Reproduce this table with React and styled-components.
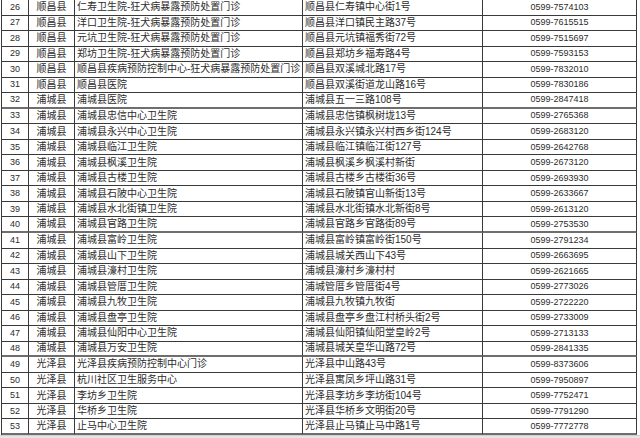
import styled, { createGlobalStyle } from "styled-components";

const GlobalStyle = createGlobalStyle`
  html, body {
    margin: 0;
    padding: 0;
    background: #ffffff;
  }
  body {
    width: 640px;
    height: 438px;
    overflow: hidden;
    font-family: "Liberation Sans", "Noto Sans CJK SC", sans-serif;
    color: #2a2a2a;
  }
`;

const rows = [
  [26, "顺昌县", "仁寿卫生院-狂犬病暴露预防处置门诊", "顺昌县仁寿镇中心街1号", "0599-7574103"],
  [27, "顺昌县", "洋口卫生院-狂犬病暴露预防处置门诊", "顺昌县洋口镇民主路37号", "0599-7615515"],
  [28, "顺昌县", "元坑卫生院-狂犬病暴露预防处置门诊", "顺昌县元坑镇福秀街72号", "0599-7515697"],
  [29, "顺昌县", "郑坊卫生院-狂犬病暴露预防处置门诊", "顺昌县郑坊乡福寿路4号", "0599-7593153"],
  [30, "顺昌县", "顺昌县疾病预防控制中心-狂犬病暴露预防处置门诊", "顺昌县双溪城北路17号", "0599-7832010"],
  [31, "顺昌县", "顺昌县医院", "顺昌县双溪街道龙山路16号", "0599-7830186"],
  [32, "浦城县", "浦城县医院", "浦城县五一三路108号", "0599-2847418"],
  [33, "浦城县", "浦城县忠信中心卫生院", "浦城县忠信镇枫树垅13号", "0599-2765368"],
  [34, "浦城县", "浦城县永兴中心卫生院", "浦城县永兴镇永兴村西乡街124号", "0599-2683120"],
  [35, "浦城县", "浦城县临江卫生院", "浦城县临江镇临江街127号", "0599-2642768"],
  [36, "浦城县", "浦城县枫溪卫生院", "浦城县枫溪乡枫溪村新街", "0599-2673120"],
  [37, "浦城县", "浦城县古楼卫生院", "浦城县古楼乡古楼街36号", "0599-2693930"],
  [38, "浦城县", "浦城县石陂中心卫生院", "浦城县石陂镇官山新街13号", "0599-2633667"],
  [39, "浦城县", "浦城县水北街镇卫生院", "浦城县水北街镇水北新街8号", "0599-2613120"],
  [40, "浦城县", "浦城县官路卫生院", "浦城县官路乡官路街89号", "0599-2753530"],
  [41, "浦城县", "浦城县富岭卫生院", "浦城县富岭镇富岭街150号", "0599-2791234"],
  [42, "浦城县", "浦城县山下卫生院", "浦城县城关西山下43号", "0599-2663695"],
  [43, "浦城县", "浦城县濠村卫生院", "浦城县濠村乡濠村村", "0599-2621665"],
  [44, "浦城县", "浦城县管厝卫生院", "浦城管厝乡管厝街4号", "0599-2773026"],
  [45, "浦城县", "浦城县九牧卫生院", "浦城县九牧镇九牧街", "0599-2722220"],
  [46, "浦城县", "浦城县盘亭卫生院", "浦城县盘亭乡盘江村桥头街2号", "0599-2733009"],
  [47, "浦城县", "浦城县仙阳中心卫生院", "浦城县仙阳镇仙阳堂皇岭2号", "0599-2713133"],
  [48, "浦城县", "浦城县万安卫生院", "浦城县城关皇华山路72号", "0599-2841335"],
  [49, "光泽县", "光泽县疾病预防控制中心门诊", "光泽县中山路43号", "0599-8373606"],
  [50, "光泽县", "杭川社区卫生服务中心", "光泽县寓凤乡坪山路31号", "0599-7950897"],
  [51, "光泽县", "李坊乡卫生院", "光泽县李坊乡李坊街104号", "0599-7752471"],
  [52, "光泽县", "华桥乡卫生院", "光泽县华桥乡文明街20号", "0599-7791290"],
  [53, "光泽县", "止马中心卫生院", "光泽县止马镇止马中路1号", "0599-7772778"],
];

const Sheet = styled.div`
  display: flex;
  flex-direction: column;
  width: 640px;
  height: 438px;
`;

const Table = styled.div`
  display: grid;
  grid-template-columns: 27px 46px 228px 180px 154px;
  grid-auto-rows: 15.54px;
  margin-left: 1px;
  border-left: 1px solid #3a3a3a;
  width: fit-content;
`;

const Cell = styled.div`
  box-sizing: border-box;
  display: flex;
  align-items: center;
  justify-content: ${(p) => (p.$align === "left" ? "flex-start" : "center")};
  padding-left: ${(p) => (p.$align === "left" ? "2px" : "0")};
  border-right: 1px solid #3a3a3a;
  border-bottom: ${(p) => (p.$thick ? "2px solid #6e6e6e" : "1px solid #3a3a3a")};
  font-size: ${(p) => (p.$digits ? "9px" : "10px")};
  line-height: 1;
  white-space: nowrap;
  overflow: hidden;
  color: #2c2c2c;
`;

const Footer = styled.div`
  flex: 1;
  background: #e6e6e6;
  border-top: 1px solid #d0d0d0;
`;

function App() {
  return (
    <Sheet>
      <GlobalStyle />
      <Table>
        {rows.map(([no, county, name, addr, phone]) => {
          const thick = no % 8 === 0 || no === 53;
          return [
            <Cell key={`${no}a`} $digits $thick={thick}>{no}</Cell>,
            <Cell key={`${no}b`} $thick={thick}>{county}</Cell>,
            <Cell key={`${no}c`} $align="left" $thick={thick}>{name}</Cell>,
            <Cell key={`${no}d`} $align="left" $thick={thick}>{addr}</Cell>,
            <Cell key={`${no}e`} $digits $thick={thick}>{phone}</Cell>,
          ];
        })}
      </Table>
      <Footer />
    </Sheet>
  );
}

export default App;
